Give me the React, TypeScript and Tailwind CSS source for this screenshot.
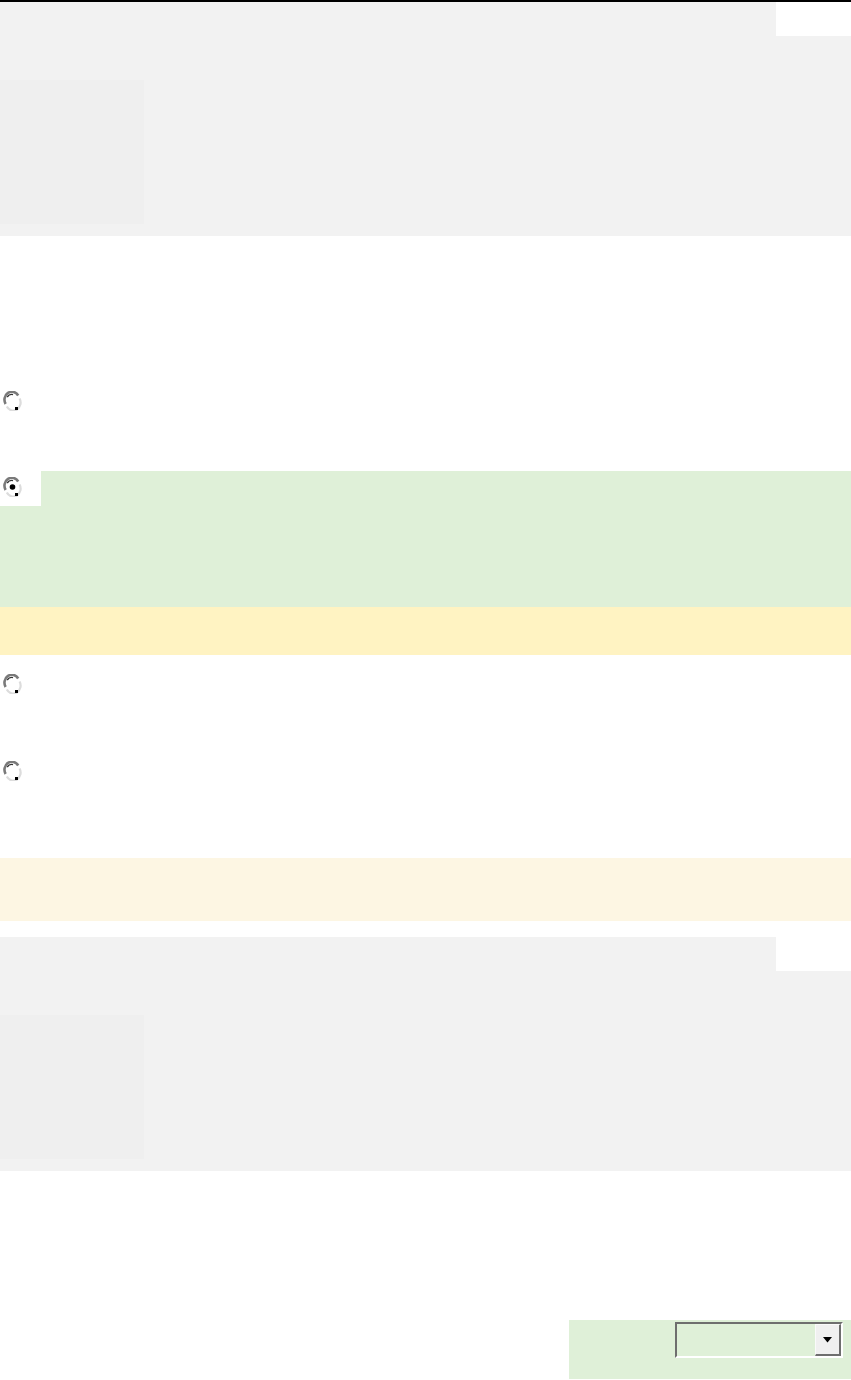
import React from 'react';

function Radio({ checked = false }: { checked?: boolean }) {
  return (
    <svg width="19" height="20" viewBox="0 0 19 20" className="block">
      <ellipse cx="9.5" cy="10" rx="7" ry="7.5" fill="#fff" />
      <path d="M15.2 4.5 A7.2 7.8 0 0 0 2.6 13" fill="none" stroke="#7a7a7a" strokeWidth="2.6" />
      <path d="M3.8 15.6 A7.2 7.8 0 0 0 16.6 7.5" fill="none" stroke="#dcdcdc" strokeWidth="2.2" />
      <path d="M4.2 6 A5.6 6 0 0 1 10 3.6" fill="none" stroke="#333" strokeWidth="1.4" />
      <rect x="12" y="16" width="3" height="3" fill="#000" />
      {checked && <circle cx="9.5" cy="10" r="2.8" fill="#000" />}
    </svg>
  );
}

function GrayBlock() {
  return (
    <div className="bg-[#f2f2f2]">
      <div className="flex h-[34px]">
        <div className="flex-1" />
        <div className="w-[75px] bg-white" />
      </div>
      <div className="pt-[44px] pb-[12px]">
        <div className="w-[144px] h-[144px] bg-[#efefef]" />
      </div>
    </div>
  );
}

export default function App() {
  return (
    <div className="w-[851px] min-h-[1380px] bg-white border-t-2 border-black font-['Liberation_Sans',sans-serif] overflow-hidden">
      <GrayBlock />

      <div className="h-[155px]" />
      <div className="h-[80px] pl-[3px]">
        <Radio />
      </div>

      <div className="flex h-[35px]">
        <div className="w-[41px] bg-white pl-[3px] pt-[6px]">
          <Radio checked />
        </div>
        <div className="flex-1 bg-[#dff0d8]" />
      </div>
      <div className="h-[101px] bg-[#dff0d8]" />
      <div className="h-[48px] bg-[#fff3c2]" />

      <div className="h-[19px]" />
      <div className="h-[87px] pl-[3px]">
        <Radio />
      </div>
      <div className="h-[97px] pl-[3px]">
        <Radio />
      </div>

      <div className="h-[63px] bg-[#fdf6e3]" />
      <div className="h-[16px]" />

      <GrayBlock />

      <div className="h-[149px]" />
      <div className="flex justify-end">
        <div className="w-[282px] h-[59px] bg-[#dff0d8] pl-[106px] pt-[2px]">
          <div className="w-[168px] h-[36px] border-2 border-t-[#6e6e6e] border-l-[#6e6e6e] border-b-white border-r-white flex justify-end">
            <div className="w-[26px] h-full bg-[#f0f0f0] border-t border-l border-[#fafafa] border-r-2 border-b-2 border-r-[#6e6e6e] border-b-[#6e6e6e] flex items-center justify-center">
              <svg width="9" height="6" viewBox="0 0 9 6">
                <path d="M0 0 H9 L4.5 5.5 Z" fill="#000" />
              </svg>
            </div>
          </div>
        </div>
      </div>
    </div>
  );
}
